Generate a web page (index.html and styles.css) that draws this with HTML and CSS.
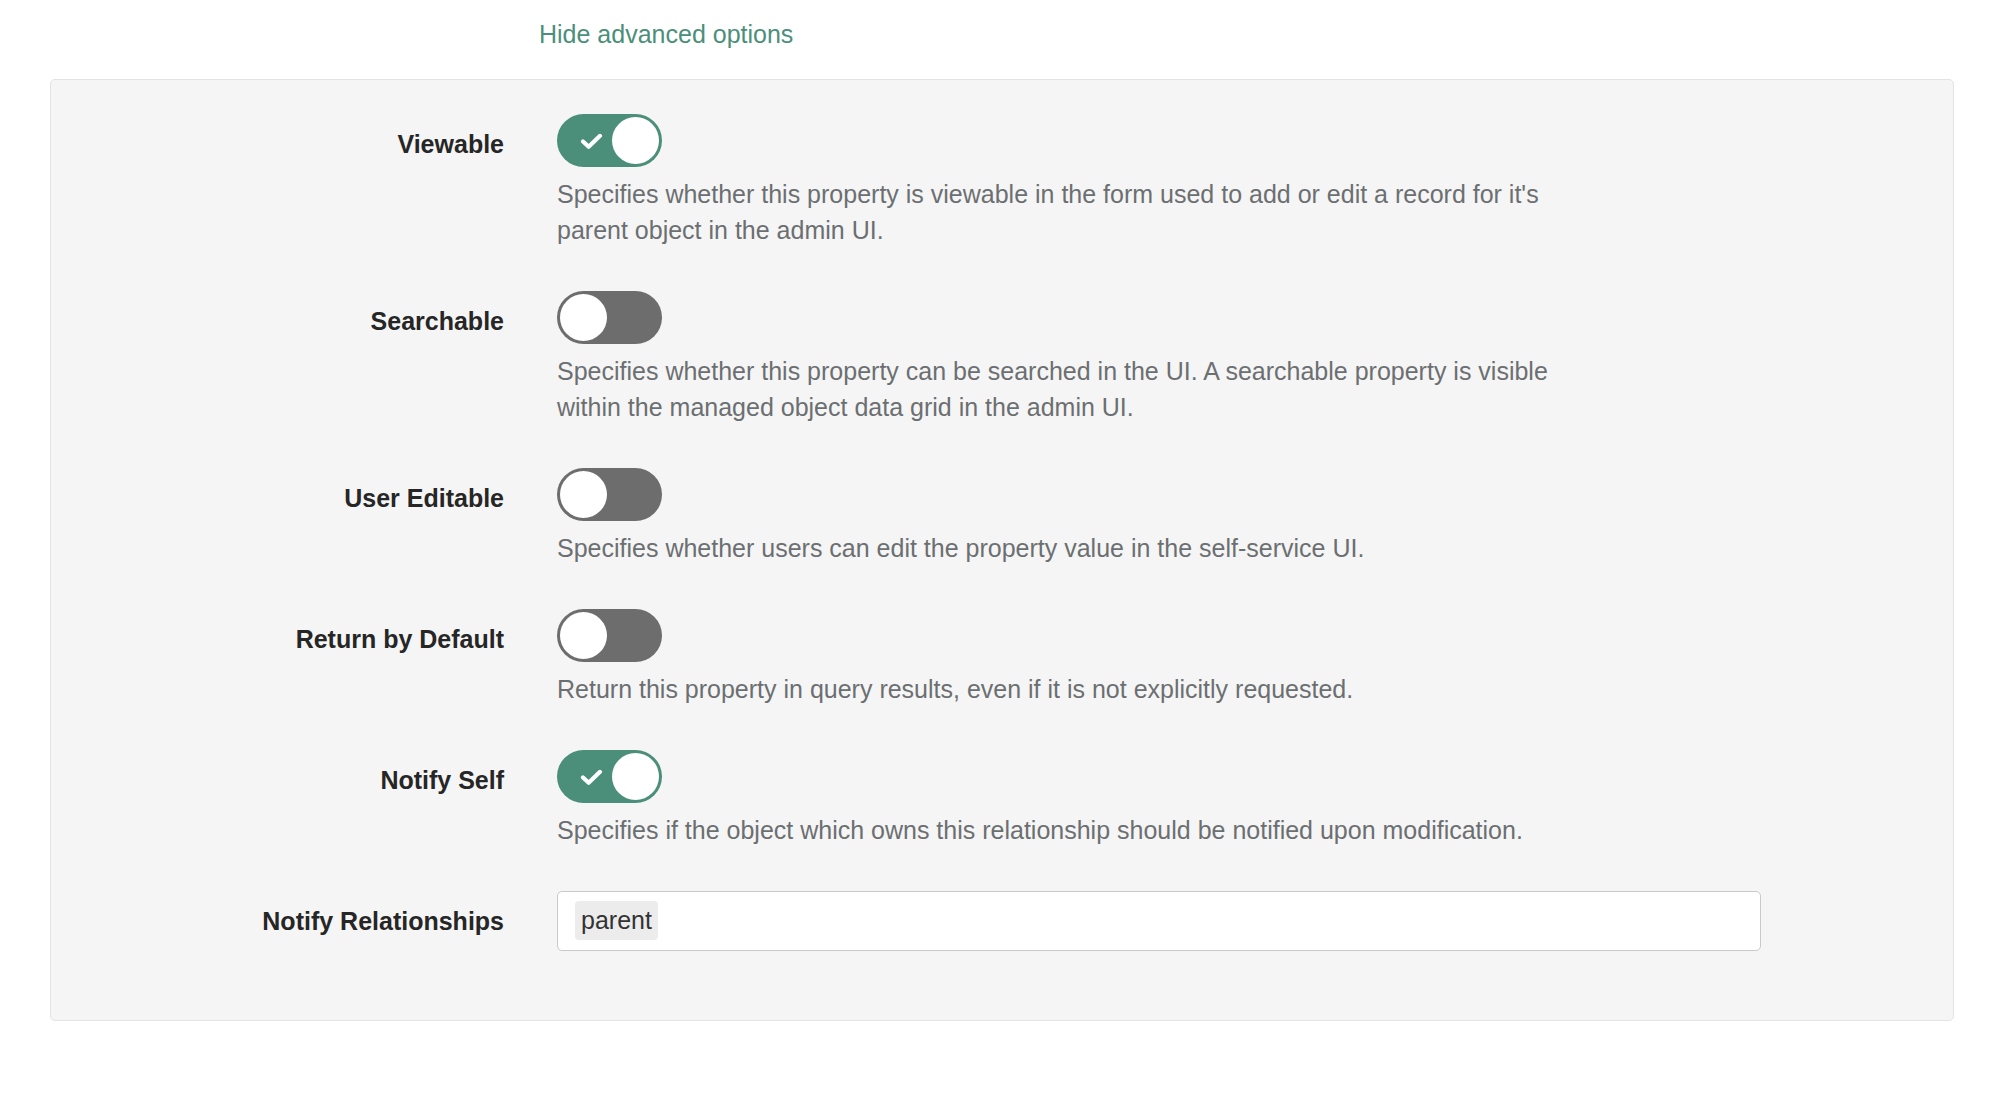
FILE: index.html
```html
<!DOCTYPE html>
<html lang="en">
<head>
<meta charset="utf-8">
<title>Advanced options</title>
<link rel="stylesheet" href="styles.css">
</head>
<body>
<div class="header"><a class="link" href="#">Hide advanced options</a></div>
<div class="panel">
  <div class="row">
    <div class="label">Viewable</div>
    <div class="control">
      <div class="toggle on">
        <svg class="check" viewBox="0 0 24 18" width="23" height="17"><polyline points="3,9 9,14.5 21,3" fill="none" stroke="#fff" stroke-width="4.4" stroke-linecap="round" stroke-linejoin="round"/></svg>
        <span class="knob"></span>
      </div>
      <p class="desc">Specifies whether this property is viewable in the form used to add or edit a record for it's parent object in the admin UI.</p>
    </div>
  </div>
  <div class="row">
    <div class="label">Searchable</div>
    <div class="control">
      <div class="toggle off"><span class="knob"></span></div>
      <p class="desc">Specifies whether this property can be searched in the UI. A searchable property is visible within the managed object data grid in the admin UI.</p>
    </div>
  </div>
  <div class="row">
    <div class="label">User Editable</div>
    <div class="control">
      <div class="toggle off"><span class="knob"></span></div>
      <p class="desc">Specifies whether users can edit the property value in the self-service UI.</p>
    </div>
  </div>
  <div class="row">
    <div class="label">Return by Default</div>
    <div class="control">
      <div class="toggle off"><span class="knob"></span></div>
      <p class="desc">Return this property in query results, even if it is not explicitly requested.</p>
    </div>
  </div>
  <div class="row">
    <div class="label">Notify Self</div>
    <div class="control">
      <div class="toggle on">
        <svg class="check" viewBox="0 0 24 18" width="23" height="17"><polyline points="3,9 9,14.5 21,3" fill="none" stroke="#fff" stroke-width="4.4" stroke-linecap="round" stroke-linejoin="round"/></svg>
        <span class="knob"></span>
      </div>
      <p class="desc">Specifies if the object which owns this relationship should be notified upon modification.</p>
    </div>
  </div>
  <div class="row last">
    <div class="label">Notify Relationships</div>
    <div class="control">
      <div class="input"><span class="tag">parent</span></div>
    </div>
  </div>
</div>
</body>
</html>
```
FILE: styles.css
```css
* { box-sizing: border-box; }
html, body { margin: 0; padding: 0; background: #ffffff; }
body {
  font-family: "Liberation Sans", Arial, Helvetica, sans-serif;
  font-size: 25px;
  line-height: 36px;
  color: #262626;
}
.header {
  padding: 16px 0 0 539px;
  height: 52px;
}
.link {
  color: #4b8f7a;
  text-decoration: none;
  font-size: 25px;
  line-height: 36px;
}
.panel {
  margin: 27px 45px 0 50px;
  border: 1px solid #e3e3e3;
  border-radius: 5px;
  background: #f5f5f5;
  padding: 34px 0 69px;
}
.row {
  display: flex;
  gap: 53px;
  margin-bottom: 43px;
}
.row.last { margin-bottom: 0; }
.label {
  flex: 0 0 453px;
  text-align: right;
  font-weight: bold;
  color: #262626;
  padding-top: 12px;
}
.control {
  flex: 0 0 1204px;
}
.toggle {
  width: 105px;
  height: 53px;
  border-radius: 27px;
  padding: 3px;
  display: flex;
  align-items: center;
}
.toggle.on { background: #4b8f7a; }
.toggle.off { background: #6d6d6d; }
.check {
  display: block;
  margin-left: 20px;
  margin-top: 1px;
}
.knob {
  display: block;
  width: 47px;
  height: 47px;
  border-radius: 50%;
  background: #ffffff;
}
.toggle.on .knob { margin-left: auto; }
.desc {
  margin: 9px 0 0;
  max-width: 1040px;
  color: #6c6f71;
}
.input {
  height: 60px;
  border: 1px solid #c9c9c9;
  border-radius: 5px;
  background: #ffffff;
  padding: 9px 17px;
  display: flex;
  align-items: flex-start;
}
.tag {
  display: inline-block;
  height: 39px;
  line-height: 39px;
  padding: 0 6px 0 6px;
  background: #ececec;
  border-radius: 4px;
  color: #333333;
}
```
